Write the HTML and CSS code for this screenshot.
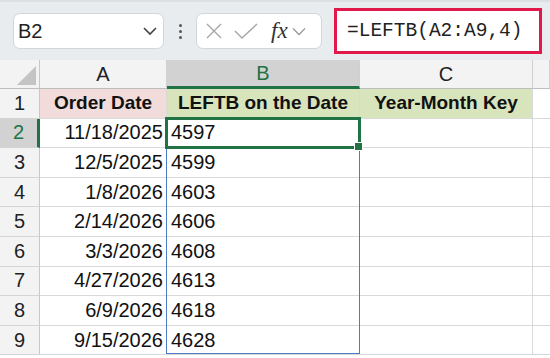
FILE: index.html
```html
<!DOCTYPE html>
<html lang="en">
<head>
  <meta charset="UTF-8" />
  <title>LEFTB</title>
  <link rel="stylesheet" href="styles.css">
</head>
<body>

  <div class="toolbar">
    <div class="namebox">
      <span>B2</span>
      <svg width="16" height="10" viewBox="0 0 16 10"><path d="M2 2 L8 8 L14 2" fill="none" stroke="#444" stroke-width="1.6"/></svg>
    </div>
    <div class="dots"><i></i><i></i><i></i></div>
    <div class="fxbox">
      <svg width="18" height="18" viewBox="0 0 18 18"><path d="M2 2 L16 16 M16 2 L2 16" stroke="#a6a6a6" stroke-width="1.4"/></svg>
      <svg width="24" height="18" viewBox="0 0 24 18"><path d="M1 9 L8 16 L23 2" fill="none" stroke="#a6a6a6" stroke-width="1.4"/></svg>
      <span class="fx">fx</span>
      <svg width="14" height="9" viewBox="0 0 14 9"><path d="M1 1.5 L7 7.5 L13 1.5" fill="none" stroke="#9a9a9a" stroke-width="1.3"/></svg>
    </div>
    <div class="formula">=LEFTB(A2:A9,4)</div>
  </div>

  <div class="sheet">
    <div class="corner"></div>
    <div class="colhead">A</div>
    <div class="colhead sel">B</div>
    <div class="colhead">C</div>
    <div class="colhead rest"></div>

    <div class="rowhead">1</div>
    <div class="cell head pink">Order Date</div>
    <div class="cell head green">LEFTB on the Date</div>
    <div class="cell head green">Year-Month Key</div>
    <div class="cell rest"></div>

    <div class="rowhead sel">2</div>
    <div class="cell num">11/18/2025</div>
    <div class="cell">4597</div>
    <div class="cell"></div>
    <div class="cell rest"></div>

    <div class="rowhead">3</div>
    <div class="cell num">12/5/2025</div>
    <div class="cell">4599</div>
    <div class="cell"></div>
    <div class="cell rest"></div>

    <div class="rowhead">4</div>
    <div class="cell num">1/8/2026</div>
    <div class="cell">4603</div>
    <div class="cell"></div>
    <div class="cell rest"></div>

    <div class="rowhead">5</div>
    <div class="cell num">2/14/2026</div>
    <div class="cell">4606</div>
    <div class="cell"></div>
    <div class="cell rest"></div>

    <div class="rowhead">6</div>
    <div class="cell num">3/3/2026</div>
    <div class="cell">4608</div>
    <div class="cell"></div>
    <div class="cell rest"></div>

    <div class="rowhead">7</div>
    <div class="cell num">4/27/2026</div>
    <div class="cell">4613</div>
    <div class="cell"></div>
    <div class="cell rest"></div>

    <div class="rowhead">8</div>
    <div class="cell num">6/9/2026</div>
    <div class="cell">4618</div>
    <div class="cell"></div>
    <div class="cell rest"></div>

    <div class="rowhead">9</div>
    <div class="cell num">9/15/2026</div>
    <div class="cell">4628</div>
    <div class="cell"></div>
    <div class="cell rest"></div>

    <!-- selection overlays, placed on grid areas -->
    <div class="range"></div>
    <div class="active"></div>
  </div>

</body>
</html>
```

FILE: styles.css
```css
body {
  margin: 0;
  font-family: "Liberation Sans", Arial, sans-serif;
  background: #fff;
  overflow: hidden;
}

.toolbar {
  height: 60px;
  box-sizing: border-box;
  background: #e9ecef;
  border-top: 2px solid #dcdfe3;
  display: flex;
  align-items: center;
  padding-left: 13px;
}

.namebox {
  width: 151px;
  height: 36px;
  box-sizing: border-box;
  background: #fff;
  border: 1px solid #d3d6da;
  border-radius: 7px;
  display: flex;
  align-items: center;
  justify-content: space-between;
  padding: 0 5px 0 4px;
  font-size: 20px;
  color: #222;
}

.dots {
  width: 32px;
  display: flex;
  flex-direction: column;
  align-items: center;
  gap: 3px;
}

.dots i {
  width: 3px;
  height: 3px;
  border-radius: 50%;
  background: #555;
}

.fxbox {
  width: 126px;
  height: 36px;
  box-sizing: border-box;
  background: #fff;
  border: 1px solid #d3d6da;
  border-radius: 7px;
  display: flex;
  align-items: center;
  padding-left: 8px;
  gap: 11px;
}

.fx {
  font-family: "Liberation Serif", serif;
  font-style: italic;
  font-size: 23px;
  color: #333;
  margin-left: 2px;
  margin-right: -7px;
}

.formula {
  margin-left: 12px;
  width: 208px;
  height: 46px;
  box-sizing: border-box;
  background: #fff;
  border: 3px solid #e0194a;
  display: flex;
  align-items: center;
  padding-left: 10px;
  font-family: "Liberation Mono", monospace;
  font-size: 19.5px;
  color: #222;
}

.sheet {
  position: relative;
  display: grid;
  grid-template-columns: 40px 127px 193px 173px 1fr;
  grid-template-rows: 29px repeat(9, 29.6px);
  font-size: 20px;
  color: #111;
}

.sheet > div {
  box-sizing: border-box;
}

.corner {
  background: #f3f3f3;
  border-right: 1px solid #c8c8c8;
  border-bottom: 1px solid #bdbdbd;
  position: relative;
}

.corner::after {
  content: "";
  position: absolute;
  right: 3px;
  bottom: 3px;
  border-left: 19px solid transparent;
  border-bottom: 19px solid #c4c4c4;
}

.colhead {
  background: #f3f3f3;
  border-right: 1px solid #d0d0d0;
  border-bottom: 1px solid #bdbdbd;
  display: flex;
  align-items: center;
  justify-content: center;
  color: #222;
}

.colhead.sel {
  background: #d2d2d2;
  color: #217346;
  border-bottom: 3px solid #217346;
}

.rowhead {
  background: #f3f3f3;
  border-right: 1px solid #c8c8c8;
  border-bottom: 1px solid #d4d4d4;
  display: flex;
  align-items: center;
  justify-content: center;
  color: #222;
}

.rowhead.sel {
  background: #d2d2d2;
  color: #217346;
  border-right: 3px solid #217346;
}

.cell {
  border-right: 1px solid #d9d9d9;
  border-bottom: 1px solid #d9d9d9;
  display: flex;
  align-items: center;
  padding: 0 4px;
  white-space: nowrap;
}

.cell.rest {
  border-right: none;
}

.head {
  font-weight: bold;
  font-size: 19px;
  justify-content: center;
}

.pink {
  background: #f2dcdb;
}

.green {
  background: #d8e4bc;
}

.num {
  justify-content: flex-end;
  padding-right: 3px;
}

.range,
.active {
  position: absolute;
  grid-column: 3 / 4;
}

.range {
  grid-row: 3 / 11;
  inset: 0 0 1px -1px;
  border: 1.5px solid #4a7cc7;
}

.active {
  grid-row: 3 / 4;
  inset: -2px -1px -1px -2px;
  border: 3px solid #217346;
}

.active::after {
  content: "";
  position: absolute;
  right: -5px;
  bottom: -5px;
  width: 7px;
  height: 7px;
  background: #217346;
  border: 1px solid #fff;
}
```
